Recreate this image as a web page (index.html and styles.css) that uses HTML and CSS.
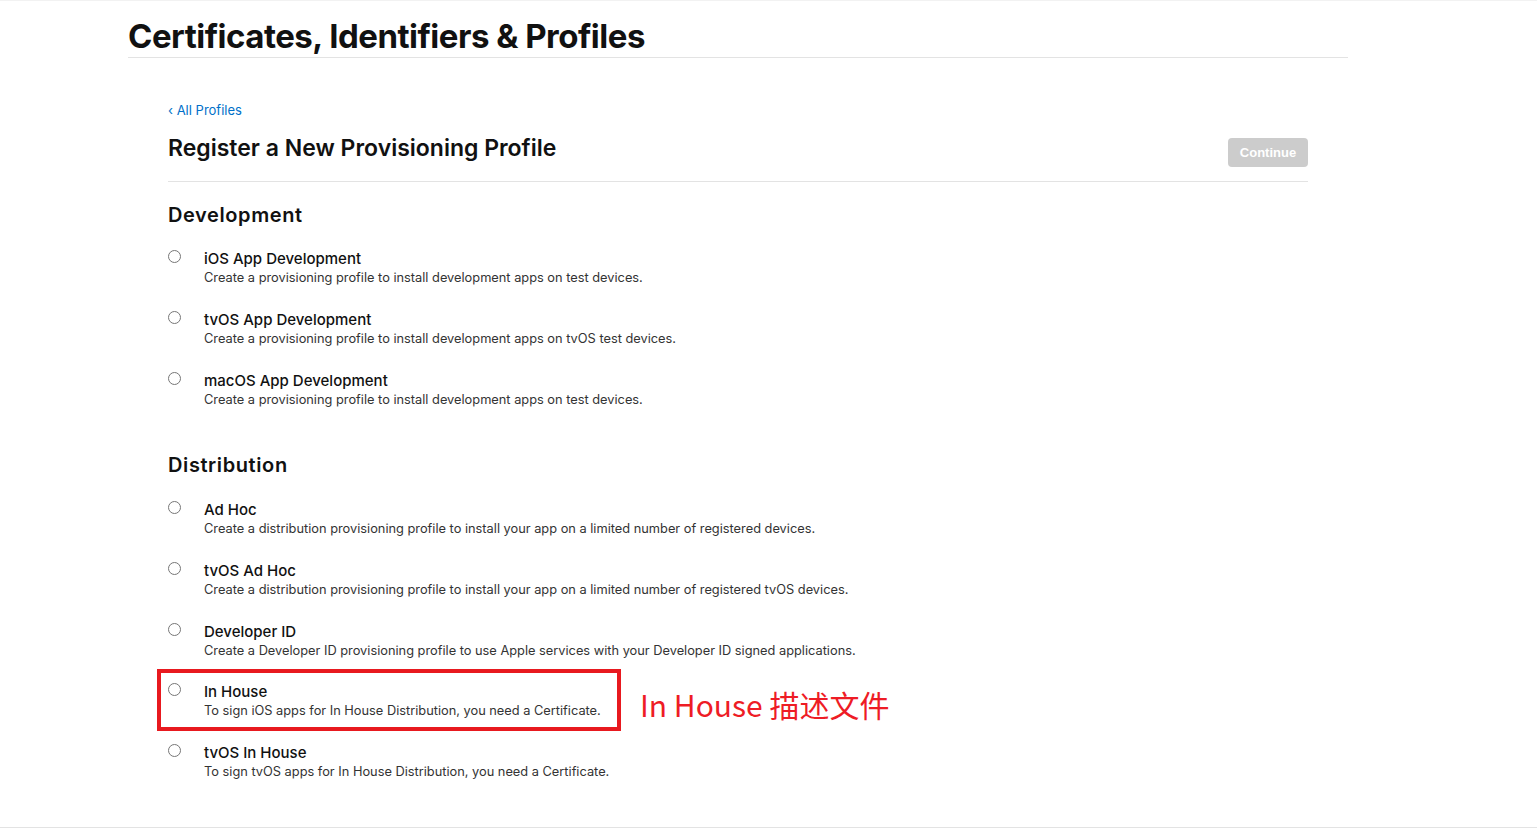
FILE: index.html
```html
<!DOCTYPE html>
<html lang="en">
<head>
    <meta charset="UTF-8">
    <title>Certificates, Identifiers &amp; Profiles</title>
    <link rel="stylesheet" href="styles.css">
</head>
<body>
    <div class="page">
        <header class="page-header">
            <h1>Certificates, Identifiers &amp; Profiles</h1>
        </header>

        <main class="content">
            <a class="back-link" href="#">&lsaquo; All Profiles</a>
            <div class="title-bar">
                <h2>Register a New Provisioning Profile</h2>
                <button class="btn-continue" disabled>Continue</button>
            </div>

            <section class="group">
                <h3>Development</h3>
                <label class="option">
                    <input type="radio" name="profile">
                    <span class="option-text">
                        <span class="option-name">iOS App Development</span>
                        <span class="option-desc">Create a provisioning profile to install development apps on test devices.</span>
                    </span>
                </label>
                <label class="option">
                    <input type="radio" name="profile">
                    <span class="option-text">
                        <span class="option-name">tvOS App Development</span>
                        <span class="option-desc">Create a provisioning profile to install development apps on tvOS test devices.</span>
                    </span>
                </label>
                <label class="option">
                    <input type="radio" name="profile">
                    <span class="option-text">
                        <span class="option-name">macOS App Development</span>
                        <span class="option-desc">Create a provisioning profile to install development apps on test devices.</span>
                    </span>
                </label>
            </section>

            <section class="group dist">
                <h3>Distribution</h3>
                <label class="option">
                    <input type="radio" name="profile">
                    <span class="option-text">
                        <span class="option-name">Ad Hoc</span>
                        <span class="option-desc">Create a distribution provisioning profile to install your app on a limited number of registered devices.</span>
                    </span>
                </label>
                <label class="option">
                    <input type="radio" name="profile">
                    <span class="option-text">
                        <span class="option-name">tvOS Ad Hoc</span>
                        <span class="option-desc">Create a distribution provisioning profile to install your app on a limited number of registered tvOS devices.</span>
                    </span>
                </label>
                <label class="option">
                    <input type="radio" name="profile">
                    <span class="option-text">
                        <span class="option-name">Developer ID</span>
                        <span class="option-desc">Create a Developer ID provisioning profile to use Apple services with your Developer ID signed applications.</span>
                    </span>
                </label>
                <label class="option marked">
                    <input type="radio" name="profile">
                    <span class="option-text">
                        <span class="option-name">In House</span>
                        <span class="option-desc">To sign iOS apps for In House Distribution, you need a Certificate.</span>
                    </span>
                    <!-- annotation -->
                    <span class="mark-box"></span>
                    <span class="mark-note">In House 描述文件</span>
                </label>
                <label class="option">
                    <input type="radio" name="profile">
                    <span class="option-text">
                        <span class="option-name">tvOS In House</span>
                        <span class="option-desc">To sign tvOS apps for In House Distribution, you need a Certificate.</span>
                    </span>
                </label>
            </section>
        </main>
    </div>
</body>
</html>
```

FILE: styles.css
```css
body {
    margin: 0;
    font-family: Inter, "Noto Sans", sans-serif;
    color: #111;
    background: #fff;
}
.page {
    border-top: 1px solid #f2f2f2;
    border-bottom: 1px solid #e3e3e3;
    height: 826px;
}
.page-header {
    width: 1220px;
    margin-left: 128px;
    border-bottom: 1px solid #e3e3e3;
    height: 56px;
}
.page-header h1 {
    margin: 0;
    padding-top: 14px;
    font-size: 33px;
    font-weight: 700;
    letter-spacing: -0.5px;
    line-height: 42px;
}
.content {
    width: 1140px;
    margin-left: 168px;
    padding-top: 43px;
}
.back-link {
    display: block;
    font-size: 13px;
    line-height: 18px;
    color: #0070c9;
    text-decoration: none;
}
.title-bar {
    display: flex;
    justify-content: space-between;
    align-items: flex-start;
    border-bottom: 1px solid #e3e3e3;
    height: 54px;
    margin-top: 8px;
}
.title-bar h2 {
    margin: 0;
    padding-top: 6px;
    font-size: 23px;
    font-weight: 600;
    line-height: 30px;
}
.btn-continue {
    margin-top: 11px;
    width: 80px;
    height: 29px;
    border: none;
    border-radius: 4px;
    background: #cccccc;
    color: #fff;
    font-family: "Liberation Sans", Arial, sans-serif;
    font-size: 13px;
    font-weight: 700;
}
.group {
    padding-top: 20px;
}
.group h3 {
    margin: 0;
    font-size: 20px;
    font-weight: 600;
    letter-spacing: 0.6px;
    line-height: 26px;
}
.group h3 + .option {
    margin-top: 21px;
}
.dist h3 + .option {
    margin-top: 22px;
}
.dist .option {
    height: 60.75px;
}
.option {
    position: relative;
    display: flex;
    align-items: flex-start;
    height: 61px;
}
.option input {
    margin: 1px 23px 0 0;
    width: 13px;
    height: 13px;
    flex-shrink: 0;
}
.option-text {
    display: flex;
    flex-direction: column;
}
.option-name {
    font-size: 15px;
    font-weight: 500;
    line-height: 19px;
}
.option-desc {
    font-size: 12.8px;
    line-height: 19px;
    color: #333;
}
.mark-box {
    position: absolute;
    left: -11px;
    top: -13px;
    width: 456px;
    height: 54px;
    border: 4px solid #e8191f;
}
.mark-note {
    position: absolute;
    left: 472px;
    top: 0;
    font-family: "Noto Sans CJK SC", sans-serif;
    font-size: 30px;
    color: #ee1c25;
    white-space: nowrap;
}
```
